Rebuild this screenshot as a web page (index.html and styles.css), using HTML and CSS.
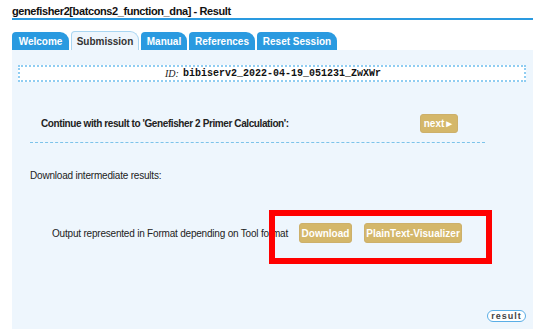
FILE: index.html
```html
<!DOCTYPE html>
<html>
<head>
<meta charset="utf-8">
<link rel="stylesheet" href="styles.css">
</head>
<body>
<div class="page">
  <h1 class="title">genefisher2[batcons2_function_dna] - Result</h1>
  <div class="tabs">
    <span class="tab tab-welcome">Welcome</span>
    <span class="tab tab-active tab-submission">Submission</span>
    <span class="tab tab-manual">Manual</span>
    <span class="tab tab-references">References</span>
    <span class="tab tab-reset">Reset Session</span>
  </div>
  <div class="panel">
    <div class="idbox"><i class="idlabel">ID:</i> <b class="idvalue">bibiserv2_2022-04-19_051231_ZwXWr</b></div>
    <div class="continue">
      <span class="continue-text">Continue with result to 'Genefisher 2 Primer Calculation':</span>
      <span class="btn btn-next">next&#9658;</span>
    </div>
    <div class="inter">Download intermediate results:</div>
    <div class="output">
      <span class="output-text">Output represented in Format depending on Tool format</span>
      <span class="btn btn-dl">Download</span>
      <span class="btn btn-vis">PlainText-Visualizer</span>
      <div class="redbox"></div>
    </div>
    <div class="result-row"><span class="result">result</span></div>
  </div>
</div>
</body>
</html>
```
FILE: styles.css
```css
html, body {
  margin: 0;
  padding: 0;
  background: #ffffff;
}
body {
  font-family: "Liberation Sans", Arial, sans-serif;
  color: #222;
  overflow: hidden;
  height: 329px;
}
.page {
  padding-left: 12px;
}
.title {
  margin: 0;
  padding-top: 4px;
  width: 521px;
  height: 14px;
  font-size: 11px;
  letter-spacing: -0.4px;
  line-height: 14px;
  font-weight: bold;
  color: #111;
  border-bottom: 2px solid #2a9ae0;
}
.tabs {
  margin-top: 12px;
  display: flex;
  gap: 2px;
  height: 18px;
}
.tab {
  display: flex;
  align-items: center;
  justify-content: center;
  height: 18px;
  background: #2a9ae0;
  color: #fff;
  font-size: 10px;
  font-weight: bold;
  border-radius: 4px 9px 0 0;
  box-sizing: border-box;
}
.tab-welcome { width: 57px; }
.tab-submission { width: 68px; }
.tab-manual { width: 46px; }
.tab-references { width: 66px; }
.tab-reset { width: 80px; }
.tab-active {
  background: #eef6fd;
  color: #333;
  border: 1px solid #a9d6f2;
  border-bottom: none;
  height: 19px;
  margin-top: -1px;
}
.panel {
  width: 521px;
  height: 280px;
  background: #eef6fd;
  box-sizing: border-box;
  padding: 15px 7px 0 6px;
}
.idbox {
  height: 17px;
  box-sizing: border-box;
  border: 2px dotted #8fcdf2;
  background: #fff;
  display: flex;
  align-items: center;
  justify-content: center;
  gap: 4px;
  padding-left: 2px;
  font-size: 10px;
}
.idlabel {
  font-family: "Liberation Serif", serif;
  font-size: 10px;
  color: #222;
}
.idvalue {
  font-family: "Liberation Mono", monospace;
  font-size: 10px;
  color: #111;
}
.continue {
  margin: 32px 41px 0 12px;
  padding: 0 27px 9px 11px;
  border-bottom: 1px dashed #7cc3ea;
  display: flex;
  align-items: center;
  justify-content: space-between;
}
.continue-text {
  font-size: 10px;
  letter-spacing: -0.4px;
  font-weight: bold;
  color: #222;
}
.btn {
  display: inline-flex;
  align-items: center;
  justify-content: center;
  background: #d4b76a;
  border: 1px solid #cdb06a;
  border-radius: 3px;
  color: #fff;
  font-size: 10px;
  font-weight: bold;
  box-sizing: border-box;
}
.btn-next {
  width: 38px;
  height: 19px;
}
.inter {
  margin: 26px 0 0 12px;
  font-size: 10px;
  letter-spacing: -0.2px;
  line-height: 13px;
  color: #222;
}
.output {
  position: relative;
  margin: 41px 0 0 34px;
  display: flex;
  align-items: center;
  height: 20px;
}
.output-text {
  font-size: 10px;
  letter-spacing: -0.2px;
  color: #222;
  width: 247px;
}
.btn-dl {
  width: 53px;
  height: 20px;
}
.btn-vis {
  width: 98px;
  height: 20px;
  margin-left: 12px;
}
.redbox {
  position: absolute;
  left: 217px;
  top: -13px;
  width: 223px;
  height: 54px;
  box-sizing: border-box;
  border: 6px solid #ff0000;
}
.result-row {
  display: flex;
  justify-content: flex-end;
  margin-top: 67px;
}
.result {
  display: inline-flex;
  align-items: center;
  justify-content: center;
  width: 39px;
  height: 12px;
  box-sizing: border-box;
  border: 1px solid #5aaee6;
  border-radius: 7px;
  background: #fff;
  font-size: 9px;
  font-weight: bold;
  letter-spacing: 1px;
  color: #444;
}
```
